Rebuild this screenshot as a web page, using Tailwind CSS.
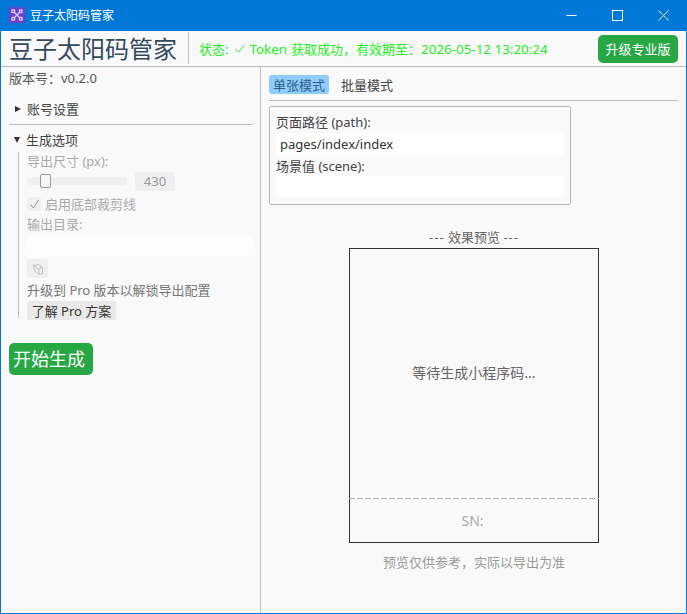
<!DOCTYPE html>
<html lang="zh"><head><meta charset="utf-8"><script src="https://cdn.jsdelivr.net/npm/@tailwindcss/browser@4"></script></head>
<body class="m-0 overflow-hidden">
<div class="w-[687px] h-[614px] flex flex-col bg-[#f9f9f9] border border-t-0 border-[#0078d7] text-[13px] leading-[18px] text-[#333] font-['Noto_Sans','Noto_Sans_CJK_SC',sans-serif] overflow-hidden">
  <div class="h-[31px] shrink-0 bg-[#0078d7] flex items-center text-white text-xs">
    <svg class="ml-[8px] mt-[-1px]" width="16" height="16" viewBox="0 0 16 16"><rect width="16" height="16" fill="#6d3fc9"/><g fill="none" stroke="#d9cdf5" stroke-width="1.3"><path d="M5 5l6 6M11 5l-6 6"/><rect x="3" y="3" width="2.5" height="2.5"/><rect x="10.5" y="3" width="2.5" height="2.5"/><rect x="3" y="10.5" width="2.5" height="2.5"/><rect x="10.5" y="10.5" width="2.5" height="2.5"/></g></svg>
    <span class="ml-[5px]">豆子太阳码管家</span>
    <div class="ml-auto flex items-center">
      <div class="w-[45px] flex justify-center"><svg width="11" height="11" viewBox="0 0 11 11"><path d="M0.5 5.5h10" stroke="#fff" stroke-width="1"/></svg></div>
      <div class="w-[46px] flex justify-center"><svg width="11" height="11" viewBox="0 0 11 11"><rect x=".5" y=".5" width="10" height="10" fill="none" stroke="#fff"/></svg></div>
      <div class="w-[46px] flex justify-center"><svg width="11" height="11" viewBox="0 0 11 11"><path d="M.5 .5l10 10M10.5 .5l-10 10" stroke="#fff" stroke-width="1"/></svg></div>
    </div>
  </div>
  <div class="h-[36px] shrink-0 flex items-center border-b border-[#bdbdbd] pl-[8px] pr-[8px]">
    <span class="text-[24px] leading-[32px] text-[#34495e] w-[170px] whitespace-nowrap">豆子太阳码管家</span>
    <div class="w-px h-[32px] bg-[#bdbdbd] ml-[9px] mb-[2px]"></div>
    <span class="ml-[10px] text-[13px] text-[#1df01d] whitespace-nowrap flex items-center"><span>状态:</span><span class="ml-[7px] w-[10px]"><svg width="10" height="8" viewBox="0 0 10 8"><path d="M.5 4l3 3 6-6.5" fill="none" stroke="#1df01d" stroke-width="1"/></svg></span><span class="ml-[4px] text-[13.4px]">Token</span><span class="ml-[4px]">获取成功，有效期至：</span><span class="text-[13.4px]">2026-05-12 13:20:24</span></span>
    <div class="ml-auto h-[28px] w-[80px] rounded-[5px] bg-[#28a745] text-white flex items-center justify-center">升级专业版</div>
  </div>
  <div class="flex-1 flex min-h-0">
    <div class="w-[260px] shrink-0 border-r border-[#bdbdbd] pl-[8px] pr-[7px]">
      <div class="mt-[2px] h-[18px] text-[#555]">版本号：v0.2.0</div>
      <div class="mt-[12px] h-[20px] flex items-center pl-[6px]"><span class="w-0 h-0 border-y-[3.5px] border-y-transparent border-l-[6px] border-l-[#333]"></span><span class="ml-[6px] text-[#444]">账号设置</span></div>
      <div class="mt-[5px] h-px bg-[#bdbdbd]"></div>
      <div class="mt-[5px] h-[20px] flex items-center pl-[5px]"><span class="w-0 h-0 border-x-[3.5px] border-x-transparent border-t-[6px] border-t-[#333]"></span><span class="ml-[6px] text-[#444]">生成选项</span></div>
      <div class="mt-[2px] ml-[9px] pl-[8px] border-l border-[#bdbdbd] h-[166px]">
        <div class="h-[18px] text-[#aaa]">导出尺寸 (px):</div>
        <div class="mt-[1px] flex items-center h-[20px]">
          <div class="relative w-[100px] h-[8px] rounded-[4px] bg-[#f0f0f0]"><div class="absolute left-[13px] -top-[3px] w-[11px] h-[14px] rounded-[2px] border border-[#9a9a9a] bg-[#f5f5f5]"></div></div>
          <div class="ml-[8px] w-[40px] h-[19px] bg-[#efefef] rounded-[2px] text-[#999] flex items-center justify-center">430</div>
        </div>
        <div class="mt-[2px] h-[22px] flex items-center"><span class="w-[14px] h-[14px] bg-[#efefef] rounded-[2px] flex items-center justify-center"><svg width="11" height="11" viewBox="0 0 11 11"><path d="M1.5 5.5l3 3.5 5-8" fill="none" stroke="#999" stroke-width="1"/></svg></span><span class="ml-[4px] text-[#aaa]">启用底部裁剪线</span></div>
        <div class="h-[19px] text-[#aaa]">输出目录:</div>
        <div class="mt-[2px] h-[21px] bg-[#fcfcfc] rounded-[2px] w-[226px]"></div>
        <div class="mt-[2px] w-[21px] h-[19px] bg-[#efefef] rounded-[2px] flex items-center justify-center"><svg width="12" height="12" viewBox="0 0 12 12"><path d="M1.5 2.5l5-1 4 3v6l-3 1-5-3.5zM1.5 2.5l5 3.5 1 5M6.5 6l4-1.5" fill="none" stroke="#bbb" stroke-width=".9"/></svg></div>
        <div class="mt-[3px] h-[18px] text-[#777] whitespace-nowrap">升级到 Pro 版本以解锁导出配置</div>
        <div class="mt-[2px] w-[89px] h-[19px] bg-[#e9e9e9] rounded-[2px] text-[#333] flex items-center justify-center whitespace-nowrap">了解 Pro 方案</div>
      </div>
      <div class="mt-[25px] w-[84px] h-[32px] rounded-[5px] bg-[#28a745] text-white text-[18px] flex items-center pl-[4px]">开始生成</div>
    </div>
    <div class="flex-1 min-w-0 pl-[8px] pr-[8px] flex flex-col">
      <div class="mt-[8px] flex h-[19px] items-center">
        <div class="w-[60px] h-[19px] rounded-[3px] bg-[#8fccfb] text-[#2b5f86] flex items-center justify-center">单张模式</div>
        <div class="ml-[12px] text-[#444]">批量模式</div>
      </div>
      <div class="mt-[6px] h-px bg-[#bdbdbd]"></div>
      <div class="mt-[5px] w-[302px] h-[99px] border border-[#b5b5b5] rounded-[2px] px-[6px] pt-[6px]">
        <div class="h-[18px] text-[#444]">页面路径 (path):</div>
        <div class="mt-[2px] h-[21px] bg-white rounded-[2px] pl-[4px] flex items-center text-[#333]">pages/index/index</div>
        <div class="mt-[3px] h-[18px] text-[#444]">场景值 (scene):</div>
        <div class="mt-[1px] h-[21px] bg-white rounded-[2px]"></div>
      </div>
      <div class="w-[250px] ml-[80px] flex flex-col items-center">
        <div class="mt-[22px] h-[19px] text-[#666] flex items-center whitespace-pre"><span class="tracking-[1px]">---</span> 效果预览 <span class="tracking-[1px]">---</span></div>
        <div class="mt-[2px] w-[250px] h-[295px] border border-[#333] flex flex-col">
          <div class="h-[249px] flex items-center justify-center text-[14px] text-[#666] pb-[1px]">等待生成小程序码...</div>
          <div class="h-px shrink-0 -mx-px bg-[repeating-linear-gradient(90deg,#aaa_0,#aaa_6px,transparent_6px,transparent_8px)]"></div>
          <div class="flex-1 flex items-center justify-center text-[14px] text-[#aaa] pr-[3px]">SN:</div>
        </div>
        <div class="mt-[10px] text-[#999] whitespace-nowrap">预览仅供参考，实际以导出为准</div>
      </div>
    </div>
  </div>
</div>
</body></html>
